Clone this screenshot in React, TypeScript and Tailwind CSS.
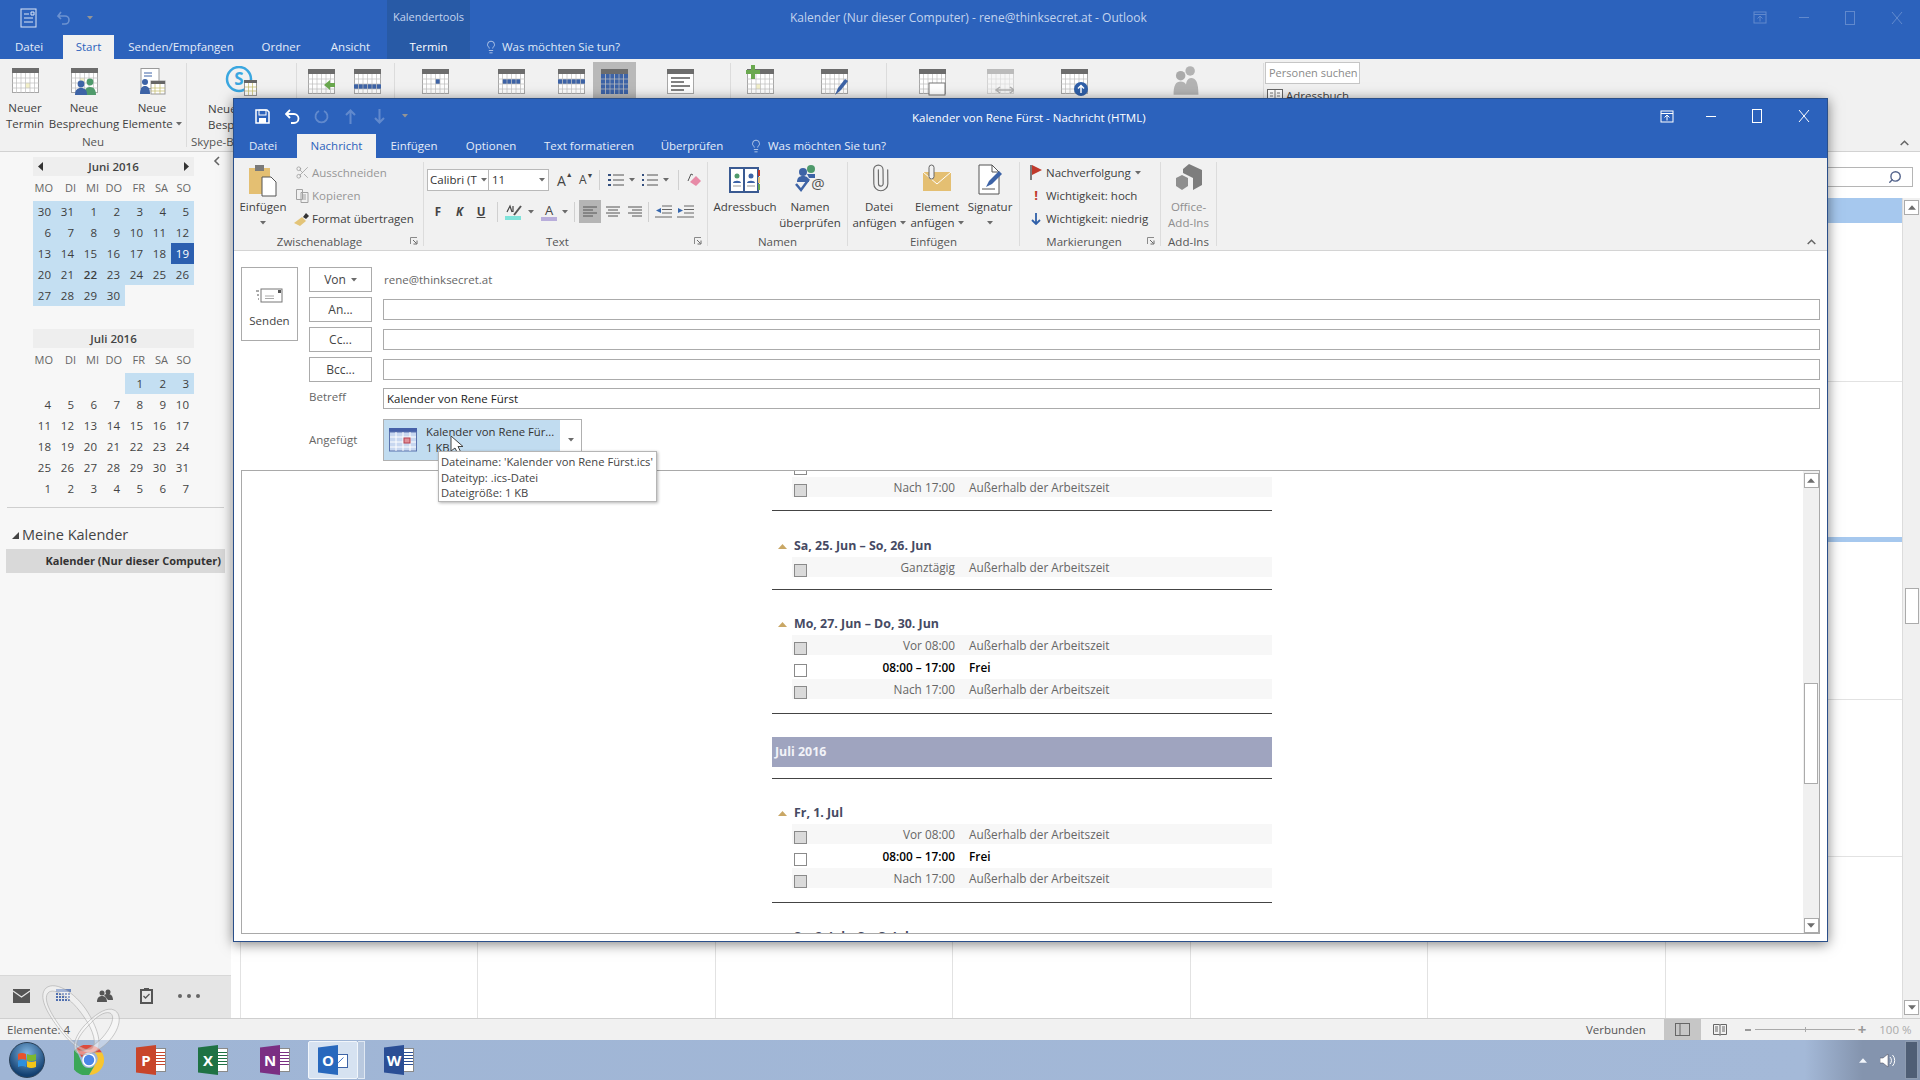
import React from "react";
import { Lightbulb, Scissors, Paperclip, Search, Check } from "lucide-react";

const BLUE = "bg-[#2c62bc]";

/* ---------- small drawing helpers ---------- */
type CalProps = { cells?: [number, number][]; fill?: string; faded?: boolean; children?: React.ReactNode };
const Cal = ({ cells = [], fill = "#3d63a6", faded, children }: CalProps) => (
  <svg width="27" height="27" viewBox="0 0 27 27" className={faded ? "opacity-40" : ""}>
    <rect x="0.5" y="0.5" width="26" height="24" fill="#fff" stroke="#a8a8a8" />
    <rect x="0" y="0" width="27" height="5" fill="#6c6c6c" />
    {cells.map(([c, r], i) => (
      <rect key={i} x={c * 4.5} y={5 + r * 5} width="4.5" height="5" fill={fill} />
    ))}
    {[4.5, 9, 13.5, 18, 22.5].map((x) => (
      <line key={x} x1={x} x2={x} y1="5" y2="25" stroke="#bdbdbd" strokeWidth="0.7" />
    ))}
    {[10, 15, 20].map((y) => (
      <line key={y} x1="0" x2="27" y1={y} y2={y} stroke="#bdbdbd" strokeWidth="0.7" />
    ))}
    {children}
  </svg>
);
const rows = (rs: number[], from = 0, to = 6) => {
  const o: [number, number][] = [];
  rs.forEach((r) => {
    for (let c = from; c < to; c++) o.push([c, r]);
  });
  return o;
};
const People = ({ c = "#3d63a6", c2 = "#4f9a6b" }: { c?: string; c2?: string }) => (
  <g>
    <circle cx="19" cy="14" r="3.4" fill={c2} />
    <path d="M13 27c0-5 2-8 6-8s6 3 6 8z" fill={c2} />
    <circle cx="10" cy="16" r="3.4" fill={c} />
    <path d="M4 27c0-5 2-7 6-7s6 2 6 7z" fill={c} />
  </g>
);
const Caret = ({ className = "" }: { className?: string }) => (
  <svg width="6" height="4" viewBox="0 0 6 4" className={className}>
    <path d="M0 0h6L3 3.5z" fill="#6b6b6b" />
  </svg>
);
const Launcher = () => (
  <svg width="8" height="8" viewBox="0 0 8 8" className="absolute right-[5px] top-[4px]">
    <path d="M.5 7V.5H7" fill="none" stroke="#8a8a8a" />
    <path d="M3 3l3.5 3.5M7 3.5V7H3.5" fill="none" stroke="#6b6b6b" />
  </svg>
);
const TriUp = ({ c = "#6d6d6d", w = 9 }: { c?: string; w?: number }) => (
  <svg width={w} height="5" viewBox="0 0 9 5">
    <path d="M4.5 0L9 5H0z" fill={c} />
  </svg>
);
const Chevron = () => (
  <svg width="9" height="6" viewBox="0 0 9 6">
    <path d="M.7 5l3.8-3.8L8.3 5" fill="none" stroke="#666" strokeWidth="1.5" />
  </svg>
);
const AlignIcon = ({ d }: { d: string }) => (
  <svg width="16" height="13" viewBox="0 0 16 13">
    <path d={d} stroke="#555" fill="none" />
  </svg>
);
const WinBtns = ({ faded }: { faded?: boolean }) => (
  <div className={`flex items-center ${faded ? "opacity-25" : ""}`}>
    <svg width="14" height="13" viewBox="0 0 14 13" className="mr-[32px]">
      <rect x="1" y="1" width="12" height="11" fill="none" stroke="#fff" />
      <path d="M1 3.500h12M7 10.500V5.500M4.500 7.500L7 5l2.500 2.500" fill="none" stroke="#fff" />
    </svg>
    <div className="w-[10px] h-px bg-white mr-[36px]" />
    <div className="w-[10px] h-[14px] border border-white mr-[36px]" />
    <svg width="12" height="14" viewBox="0 0 12 14">
      <path d="M1 1l10 12M11 1L1 13" stroke="#fff" fill="none" />
    </svg>
  </div>
);

/* ---------- ribbon parts ---------- */
const Sep = () => <div className="w-px my-[4px] bg-[#dcdcdc]" />;
const Group = ({
  w,
  label,
  lp = "",
  launcher,
  children,
}: {
  w: string;
  label?: string;
  lp?: string;
  launcher?: boolean;
  children: React.ReactNode;
}) => (
  <div className={`${w} relative flex flex-col`}>
    <div className="flex-1 flex min-h-0">{children}</div>
    <div className={`h-[17px] relative flex justify-center pt-[2px] ${lp} text-[11.5px] leading-[14px] text-[#555] shrink-0`}>
      {label}
      {launcher && <Launcher />}
    </div>
  </div>
);
const Big = ({
  w,
  icon,
  l1,
  l2,
  caret,
  grey,
}: {
  w: string;
  icon: React.ReactNode;
  l1?: string;
  l2?: string;
  caret?: boolean;
  grey?: boolean;
}) => (
  <div className={`${w} shrink-0 flex flex-col items-center pt-[6px] text-[11.5px] leading-[16px] ${grey ? "text-[#8e8e8e]" : "text-[#3f3f3f]"}`}>
    <div className="h-[35px] flex items-start justify-center">{icon}</div>
    <div className="whitespace-nowrap">{l1}</div>
    <div className="whitespace-nowrap h-[16px] flex items-center gap-[3px]">
      {l2}
      {caret && <Caret />}
    </div>
  </div>
);
const Small = ({ icon, text, grey, caret }: { icon: React.ReactNode; text: string; grey?: boolean; caret?: boolean }) => (
  <div className={`h-[23px] flex items-center text-[11.5px] whitespace-nowrap ${grey ? "text-[#979797]" : "text-[#3f3f3f]"}`}>
    <div className="w-[20px] flex justify-center shrink-0">{icon}</div>
    {text}
    {caret && <Caret className="ml-[4px]" />}
  </div>
);

/* ---------- outer ribbon ---------- */
const OuterTab = ({ w, t, active, dark, extra = "" }: { w: string; t: string; active?: boolean; dark?: boolean; extra?: string }) => (
  <div
    className={`${w} ${extra} h-full flex items-center justify-center text-[11.5px] ${
      active ? "bg-[#f1f1f1] text-[#2c62bc]" : dark ? "bg-[#285aa6] text-white" : "text-[#e4ecf8]"
    }`}
  >
    {t}
  </div>
);
const OuterBig = ({ w, icon, a, b, caret }: { w: string; icon: React.ReactNode; a: string; b: string; caret?: boolean }) => (
  <div className={`${w} shrink-0 flex flex-col items-center pt-[9px] text-[11.5px] leading-[16px] text-[#3f3f3f] whitespace-nowrap`}>
    <div className="h-[32px]">{icon}</div>
    <div>{a}</div>
    <div className="flex items-center gap-[3px]">
      {b}
      {caret && <Caret />}
    </div>
  </div>
);

const OuterHeader = () => (
  <div className={`${BLUE} h-[59px] shrink-0 flex flex-col`}>
    <div className="h-[35px] flex">
      <div className="w-[387px] flex items-center pl-[20px]">
        <svg width="18" height="20" viewBox="0 0 18 20">
          <rect x="1" y="1" width="15" height="18" fill="none" stroke="#dbe5f5" />
          <path d="M4 6h5M4 10h9M4 14h9M11 4h3v3h-3z" stroke="#dbe5f5" fill="none" />
        </svg>
        <svg width="14" height="14" viewBox="0 0 14 14" className="ml-[19px] opacity-30">
          <path d="M4 1L1 5l3 3M1 5h7a4 4 0 010 8H5" fill="none" stroke="#fff" strokeWidth="1.6" />
        </svg>
        <Caret className="ml-[16px] invert" />
      </div>
      <div className="w-[83px] bg-[#285aa6] flex items-center justify-center text-[11px] text-[#c4d4ee]">Kalendertools</div>
      <div className="ml-[320px] flex items-center text-[12px] text-[#c3d4ee] whitespace-nowrap w-[640px]">
        Kalender (Nur dieser Computer) - rene@thinksecret.at - Outlook
      </div>
      <div className="flex-1 flex justify-end items-center pr-[17px]">
        <WinBtns faded />
      </div>
    </div>
    <div className="h-[24px] flex">
      <OuterTab w="w-[63px]" extra="pr-[5px]" t="Datei" />
      <OuterTab w="w-[51px]" t="Start" active />
      <OuterTab w="w-[134px]" t="Senden/Empfangen" />
      <OuterTab w="w-[66px]" t="Ordner" />
      <OuterTab w="w-[73px]" t="Ansicht" />
      <OuterTab w="w-[83px]" t="Termin" dark />
      <div className="ml-[14px] flex items-center gap-[4px] text-[11.5px] text-[#dfe8f6]">
        <Lightbulb size={14} strokeWidth={1.2} />
        Was möchten Sie tun?
      </div>
    </div>
  </div>
);

const OuterRibbon = () => (
  <div className="h-[93px] shrink-0 bg-[#f1f1f1] border-b border-[#d2d2d2] flex">
    <div className="w-[186px] flex flex-col">
      <div className="flex-1 flex pl-[0px]">
        <OuterBig w="w-[50px]" icon={<Cal cells={[[3, 2]]} fill="#f3f0c8" />} a="Neuer" b="Termin" />
        <OuterBig
          w="w-[68px]"
          icon={
            <Cal cells={[[2, 1]]} fill="#f3f0c8">
              <People />
            </Cal>
          }
          a="Neue"
          b="Besprechung"
        />
        <OuterBig
          w="w-[68px]"
          icon={
            <svg width="27" height="27" viewBox="0 0 27 27">
              <rect x="2" y="0.500" width="18" height="20" fill="#fff" stroke="#9a9a9a" />
              <path d="M5 5h8M5 8h8" stroke="#3d63a6" />
              <circle cx="6" cy="14" r="3" fill="#3d63a6" />
              <path d="M1 26c0-6 2-8 5-8s5 2 5 8z" fill="#3d63a6" />
              <rect x="12" y="13" width="14" height="13" fill="#fff" stroke="#999" />
              <rect x="12" y="13" width="14" height="3" fill="#666" />
              <path d="M16 16v10M21 16v10M12 20h14M12 23h14" stroke="#c2b964" strokeWidth=".7" />
            </svg>
          }
          a="Neue"
          b="Elemente"
          caret
        />
      </div>
      <div className="text-center text-[11.5px] leading-[16px] pb-[1px] text-[#555]">Neu</div>
    </div>
    <Sep />
    <div className="w-[109px] flex flex-col">
      <div className="flex-1 pl-[38px] pt-[7px] flex flex-col text-[11.5px] leading-[16px] text-[#3f3f3f]">
        <svg width="32" height="30" viewBox="0 0 32 30" className="shrink-0">
          <circle cx="14" cy="13" r="12" fill="none" stroke="#3aa7e0" strokeWidth="2.500" />
          <text x="14" y="19" textAnchor="middle" fontSize="17" fontWeight="700" fill="#3aa7e0" fontFamily="Open Sans">S</text>
          <rect x="19.500" y="14.500" width="12" height="15" fill="#fff" stroke="#999" />
          <rect x="19" y="14" width="13" height="3" fill="#666" />
          <path d="M23.500 17v12M27.500 17v12M20 21h12M20 25h12" stroke="#c2b964" strokeWidth=".7" />
        </svg>
        <div className="-ml-[17px] mt-[5px] whitespace-nowrap">Neue</div>
        <div className="-ml-[17px] whitespace-nowrap">Besprechung</div>
      </div>
      <div className="text-[11.5px] leading-[16px] text-[#555] whitespace-nowrap pb-[1px] pl-[4px]">Skype-Besprechung</div>
    </div>
    <Sep />
    <div className="w-[97px] flex pt-[10px] pl-[11px] gap-[19px]">
      <Cal>
        <path d="M22 11l-6 5 6 5v-3h5v-4h-5z" fill="#6aa84f" />
      </Cal>
      <Cal cells={rows([2])} />
    </div>
    <Sep />
    <div className="w-[335px] flex items-start pt-[3px] pl-[27px]">
      <div className="pt-[7px]">
        <Cal cells={[[3, 1]]} />
      </div>
      <div className="pt-[7px] ml-[49px]">
        <Cal cells={rows([1], 1, 5)} />
      </div>
      <div className="pt-[7px] ml-[33px]">
        <Cal cells={rows([1])} />
      </div>
      <div className="ml-[8px] px-[8px] pt-[7px] pb-[6px] bg-[#b9b9b9] flex">
        <Cal cells={rows([0, 1, 2, 3])} />
      </div>
      <div className="pt-[7px] ml-[31px]">
        <svg width="27" height="27" viewBox="0 0 27 27">
          <rect x="0.500" y="0.500" width="26" height="24" fill="#fff" stroke="#a8a8a8" />
          <rect width="27" height="5" fill="#6c6c6c" />
          <path d="M4 9h19M4 13h13M4 17h19M4 21h13" stroke="#5a5a5a" strokeWidth="1.4" />
        </svg>
      </div>
    </div>
    <Sep />
    <div className="w-[155px] flex pt-[10px] pl-[16px]">
      <div className="relative">
        <Cal cells={[[2, 2]]} fill="#f3f0c8" />
        <svg width="14" height="14" viewBox="0 0 14 14" className="absolute -left-[1px] -top-[4px]">
          <path d="M5 0h4v5h5v4H9v5H5V9H0V5h5z" fill="#6aa84f" />
        </svg>
      </div>
      <div className="ml-[47px]">
        <Cal>
          <path d="M14 26l3-7 7-9 3 2-7 9z" fill="#3d63a6" />
        </Cal>
      </div>
    </div>
    <Sep />
    <div className="w-[376px] flex pt-[10px] pl-[32px] relative">
      <Cal>
        <rect x="10" y="14" width="16" height="12" fill="#fff" stroke="#777" />
      </Cal>
      <div className="ml-[41px]">
        <Cal faded>
          <path d="M10 21h16M13 18l-4 3 4 3M23 18l4 3-4 3" fill="none" stroke="#555" strokeWidth="1.500" />
        </Cal>
      </div>
      <div className="ml-[47px]">
        <Cal>
          <circle cx="20" cy="20" r="7" fill="#2f5fa8" />
          <path d="M20 24v-7M17 19.500l3-3 3 3" stroke="#fff" strokeWidth="1.500" fill="none" />
        </Cal>
      </div>
      <div className="ml-[81px] -mt-[4px] opacity-50">
        <svg width="34" height="32" viewBox="0 0 27 27">
          <circle cx="17" cy="5" r="4" fill="#777" />
          <circle cx="9" cy="9" r="4" fill="#666" />
          <path d="M3 25c0-8 2-11 6-11s6 3 6 11zM13 25c0-10 1-14 5-14s6 4 6 14z" fill="#777" />
        </svg>
      </div>
    </div>
    <Sep />
    <div className="w-[96px] flex flex-col pt-[3px] pl-[1px]">
      <div className="h-[22px] w-[95px] border border-[#c6c6c6] bg-white flex items-center pl-[3px] text-[11px] text-[#8a8a8a] whitespace-nowrap">
        Personen suchen
      </div>
      <div className="mt-[3px] flex items-center text-[11.5px] text-[#3f3f3f] pl-[2px] gap-[3px]">
        <svg width="16" height="13" viewBox="0 0 16 13">
          <rect x=".5" y=".5" width="15" height="12" fill="#fff" stroke="#666" />
          <path d="M8 1v11M3 4h3M3 7h3M10 4h3M10 7h3" stroke="#777" />
        </svg>
        Adressbuch
      </div>
    </div>
    <div className="flex-1 flex flex-col justify-end items-end pb-[5px] pr-[11px]">
      <Chevron />
    </div>
  </div>
);

/* ---------- left navigation ---------- */
const DOW = ["MO", "DI", "MI", "DO", "FR", "SA", "SO"];
const Month = ({
  title,
  arrows,
  days,
}: {
  title: string;
  arrows?: boolean;
  days: { t: string; hi?: boolean; sel?: boolean; b?: boolean }[];
}) => (
  <div className="w-[161px]">
    <div className="h-[19px] bg-[#eeeeee] flex items-center justify-between px-[5px] text-[11.5px] font-semibold text-[#444]">
      <span className={arrows ? "" : "invisible"}>
        <svg width="5" height="9" viewBox="0 0 5 9">
          <path d="M5 0v9L0 4.500z" fill="#333" />
        </svg>
      </span>
      {title}
      <span className={arrows ? "" : "invisible"}>
        <svg width="5" height="9" viewBox="0 0 5 9">
          <path d="M0 0v9l5-4.500z" fill="#333" />
        </svg>
      </span>
    </div>
    <div className="grid grid-cols-7 h-[25px] items-center text-[11px] text-[#666]">
      {DOW.map((d) => (
        <div key={d} className="text-right pr-[4px] -mr-px">
          {d}
        </div>
      ))}
    </div>
    <div className="grid grid-cols-7">
      {days.map((d, i) => (
        <div
          key={i}
          className={`h-[21px] text-right pr-[5px] text-[11.5px] leading-[21px] ${
            d.sel ? "bg-[#2b5fb0] text-white" : d.hi ? "bg-[#c4dff2] text-[#3d3d3d]" : "text-[#444]"
          } ${d.b ? "font-semibold" : ""}`}
        >
          {d.t}
        </div>
      ))}
    </div>
  </div>
);
const range = (a: number, b: number) => Array.from({ length: b - a + 1 }, (_, i) => a + i);
const june = [30, 31, ...range(1, 30)].map((n, i) => ({
  t: String(n),
  hi: true,
  sel: i > 1 && n === 19,
  b: i > 1 && n === 22,
}));
const july = [
  ...[0, 0, 0, 0].map(() => ({ t: "" })),
  ...[1, 2, 3].map((n) => ({ t: String(n), hi: true })),
  ...range(4, 31).map((n) => ({ t: String(n) })),
  ...range(1, 7).map((n) => ({ t: String(n) })),
];

const Nav = () => (
  <div className="w-[231px] shrink-0 flex flex-col bg-[#f7f7f7] relative">
    <div className="absolute left-[213px] top-[4px]">
      <svg width="7" height="10" viewBox="0 0 7 10">
        <path d="M6 1L2 5l4 4" fill="none" stroke="#666" strokeWidth="1.600" />
      </svg>
    </div>
    <div className="pl-[33px] pt-[5px]">
      <Month title="Juni 2016" arrows days={june} />
      <div className="h-[23px]" />
      <Month title="Juli 2016" days={july} />
    </div>
    <div className="mt-[8px] mx-[7px] h-px bg-[#cfcfcf]" />
    <div className="h-[41px] flex items-center pl-[12px] pt-[13px] text-[14.5px] text-[#444] gap-[3px]">
      <svg width="7" height="7" viewBox="0 0 7 7">
        <path d="M7 0v7H0z" fill="#444" />
      </svg>
      Meine Kalender
    </div>
    <div className="mx-[6px] h-[24px] bg-[#d9d9d9] flex items-center justify-end pr-[4px] text-[11px] font-bold text-[#333] whitespace-nowrap">
      Kalender (Nur dieser Computer)
    </div>
    <div className="flex-1" />
    <div className="h-[43px] bg-[#e5e5e5] border-t border-[#d8d8d8] flex items-center pl-[13px] pb-[3px]">
      <svg width="17" height="14" viewBox="0 0 17 14">
        <rect width="17" height="14" fill="#555" />
        <path d="M0 2l8.500 6L17 2" fill="none" stroke="#e5e5e5" strokeWidth="1.200" />
      </svg>
      <svg width="15" height="13" viewBox="0 0 15 13" className="ml-[26px]">
        <rect width="15" height="3" fill="#6b86bd" />
        <path d="M0 5h15M0 8h15M0 11h15" stroke="#4f6fb0" strokeWidth="2" strokeDasharray="2 1" />
      </svg>
      <svg width="16" height="13" viewBox="0 0 16 13" className="ml-[26px]">
        <circle cx="5" cy="4" r="2.500" fill="#555" />
        <circle cx="11" cy="3" r="2.500" fill="#555" />
        <path d="M0 13c0-4 2-6 5-6s5 2 5 6zM7 6c1-1 2-1 4-1 3 0 5 2 5 6h-5z" fill="#555" />
      </svg>
      <svg width="13" height="16" viewBox="0 0 13 16" className="ml-[27px]">
        <rect x="1" y="2" width="11" height="13" fill="none" stroke="#555" strokeWidth="2" />
        <rect x="4" y="0" width="5" height="3" fill="#555" />
        <path d="M3.500 8l2 2 4-4" fill="none" stroke="#555" strokeWidth="1.300" />
      </svg>
      <div className="ml-[25px] flex gap-[5px]">
        <div className="w-[4px] h-[4px] rounded-full bg-[#666]" />
        <div className="w-[4px] h-[4px] rounded-full bg-[#666]" />
        <div className="w-[4px] h-[4px] rounded-full bg-[#666]" />
      </div>
    </div>
  </div>
);

/* ---------- calendar background ---------- */
const ScrollBtn = ({ up }: { up?: boolean }) => (
  <div className="w-[15px] h-[15px] bg-white border border-[#ababab] flex items-center justify-center shrink-0">
    <div className={`flex ${up ? "" : "rotate-180"}`}>
      <TriUp w={8} />
    </div>
  </div>
);
const Content = () => (
  <div className="flex-1 flex flex-col bg-white min-w-0">
    <div className="h-[46px] shrink-0 pt-[15px] pl-[9px] pr-[7px]">
      <div className="h-[20px] border border-[#b5b5b5] flex items-center justify-end pr-[10px]">
        <Search size={14} strokeWidth={2.4} className="text-[#54648c] -scale-x-100" />
      </div>
    </div>
    <div className="flex-1 flex pl-[9px] min-h-0">
      <div className="flex-1 flex flex-col border-r border-[#dcdcdc] min-w-0">
        <div className="h-[25px] bg-[#a6c8ee] shrink-0" />
        <div className="flex-1 grid grid-cols-7 grid-rows-[159px_160px_158px_157px_1fr]">
          {range(1, 35).map((n) => (
            <div
              key={n}
              className={`border-l border-[#e2e2e2] ${n > 28 ? "" : n > 7 && n <= 14 ? "border-b-[5px] border-b-[#a6c8ee]" : "border-b"}`}
            />
          ))}
        </div>
      </div>
      <div className="w-[17px] shrink-0 bg-[#f0f0f0] flex flex-col items-center pt-[2px]">
        <ScrollBtn up />
        <div className="mt-[373px] w-[14px] h-[36px] bg-white border border-[#ababab]" />
        <div className="flex-1" />
        <ScrollBtn />
        <div className="h-[3px]" />
      </div>
    </div>
  </div>
);

/* ---------- dialog body rows ---------- */
const Row = ({ time, status, free }: { time: string; status: string; free?: boolean }) => (
  <div className="h-[22px] py-px pl-[20px]">
    <div className={`h-full flex ${free ? "text-black font-semibold" : "bg-[#f7f7f7] text-[#666]"} text-[11.8px] leading-[20px]`}>
      <div
        className={`ml-[2px] mt-[7px] w-[13px] h-[13px] shrink-0 border border-[#8a8a8a] ${
          free ? "bg-white" : "bg-[#dadada]"
        }`}
      />
      <div className="w-[148px] shrink-0 text-right whitespace-nowrap">{time}</div>
      <div className="ml-[14px] whitespace-nowrap">{status}</div>
    </div>
  </div>
);
const Head = ({ t }: { t: string }) => (
  <div className="h-[21px] flex items-center pl-[5px] gap-[6px] pt-[1px] text-[12.4px] font-bold text-[#464a63] whitespace-nowrap">
    <TriUp c="#c9a765" w={11} />
    {t}
  </div>
);
const Rule = ({ className }: { className: string }) => <div className={`${className} h-px bg-[#444]`} />;
const NACH = "Nach 17:00";
const VOR = "Vor 08:00";
const OUT = "Außerhalb der Arbeitszeit";
const Body = () => (
  <div className="mx-[7px] h-[464px] border border-[#a9a9a9] flex overflow-hidden bg-white">
    <div className="flex-1 min-w-0 overflow-hidden">
      <div className="w-[500px] ml-[530px] -mt-[17px]">
        <Row time="08:00 – 17:00" status="Frei" free />
        <Row time={NACH} status={OUT} />
        <Rule className="mt-[12px]" />
        <div className="pt-[24px]">
          <Head t="Sa, 25. Jun – So, 26. Jun" />
          <Row time="Ganztägig" status={OUT} />
        </div>
        <Rule className="mt-[11px]" />
        <div className="pt-[23px]">
          <Head t="Mo, 27. Jun – Do, 30. Jun" />
          <Row time={VOR} status={OUT} />
          <Row time="08:00 – 17:00" status="Frei" free />
          <Row time={NACH} status={OUT} />
        </div>
        <Rule className="mt-[13px]" />
        <div className="mt-[23px] h-[30px] bg-[#9fa4bf] flex items-center pl-[3px] pt-[1px] text-[12.4px] font-bold text-[#f2f3f8]">
          Juli 2016
        </div>
        <Rule className="mt-[11px]" />
        <div className="pt-[23px]">
          <Head t="Fr, 1. Jul" />
          <Row time={VOR} status={OUT} />
          <Row time="08:00 – 17:00" status="Frei" free />
          <Row time={NACH} status={OUT} />
        </div>
        <Rule className="mt-[13px]" />
        <div className="pt-[23px]">
          <Head t="Sa, 2. Jul – So, 3. Jul" />
        </div>
      </div>
    </div>
    <div className="w-[16px] shrink-0 bg-[#f0f0f0] flex flex-col items-center pt-[2px]">
      <ScrollBtn up />
      <div className="mt-[195px] w-[14px] h-[101px] bg-white border border-[#ababab]" />
      <div className="flex-1" />
      <ScrollBtn />
    </div>
  </div>
);

/* ---------- dialog ---------- */
const FormBtn = ({ children }: { children: React.ReactNode }) => (
  <div className="w-[63px] h-[25px] shrink-0 border border-[#ababab] flex items-center justify-center gap-[5px] text-[12px] text-[#444]">
    {children}
  </div>
);
const FormRow = ({ label }: { label: string }) => (
  <div className="h-[25px] flex items-center mb-[5px]">
    <FormBtn>{label}</FormBtn>
    <div className="ml-[11px] flex-1 h-[21px] border border-[#ababab] bg-white" />
  </div>
);

const Dlg = () => (
  <div className="absolute left-[233px] top-[98px] w-[1595px] h-[844px] bg-white border border-[#2a4f8a] shadow-[0_2px_12px_rgba(0,0,0,0.5)] flex flex-col z-10">
    {/* title */}
    <div className={`${BLUE} h-[59px] shrink-0 flex flex-col`}>
      <div className="h-[34px] flex items-center relative">
        <div className="flex items-center pl-[21px]">
          <svg width="15" height="15" viewBox="0 0 15 15">
            <path d="M1 1h11l2 2v11H1z" fill="none" stroke="#fff" strokeWidth="1.500" />
            <rect x="4" y="1" width="7" height="5" fill="none" stroke="#fff" />
            <rect x="4" y="9" width="7" height="5" fill="#fff" />
          </svg>
          <svg width="15" height="15" viewBox="0 0 15 15" className="ml-[15px]">
            <path d="M5 1L1 5l4 4M1 5h8a4.500 4.500 0 010 9H6" fill="none" stroke="#fff" strokeWidth="1.800" />
          </svg>
          <svg width="15" height="15" viewBox="0 0 15 15" className="ml-[14px] opacity-25">
            <path d="M10 2a6 6 0 11-5 0" fill="none" stroke="#fff" strokeWidth="1.800" />
          </svg>
          <svg width="13" height="15" viewBox="0 0 13 15" className="ml-[15px] opacity-25">
            <path d="M6.500 15V2M2 6l4.500-4.500L11 6" fill="none" stroke="#fff" strokeWidth="2" />
          </svg>
          <svg width="13" height="15" viewBox="0 0 13 15" className="ml-[16px] opacity-25">
            <path d="M6.500 0v13M2 9l4.500 4.500L11 9" fill="none" stroke="#fff" strokeWidth="2" />
          </svg>
          <Caret className="ml-[16px] invert" />
        </div>
        <div className="ml-[504px] mt-[4px] text-[11.5px] text-white whitespace-nowrap">Kalender von Rene Fürst - Nachricht (HTML)</div>
        <div className="flex-1 flex justify-end pr-[17px]">
          <WinBtns />
        </div>
      </div>
      <div className="flex-1 flex pt-[1px]">
        <div className="w-[63px] pr-[5px] flex items-center justify-center text-[11.5px] text-[#e4ecf8]">Datei</div>
        <div className="w-[79px] bg-[#f1f1f1] flex items-center justify-center text-[11.5px] text-[#2c62bc]">Nachricht</div>
        <div className="w-[76px] flex items-center justify-center text-[11.5px] text-[#e4ecf8]">Einfügen</div>
        <div className="w-[78px] flex items-center justify-center text-[11.5px] text-[#e4ecf8]">Optionen</div>
        <div className="w-[118px] flex items-center justify-center text-[11.5px] text-[#e4ecf8]">Text formatieren</div>
        <div className="w-[88px] flex items-center justify-center text-[11.5px] text-[#e4ecf8]">Überprüfen</div>
        <div className="ml-[13px] flex items-center gap-[5px] text-[11.5px] text-[#e4ecf8]">
          <Lightbulb size={14} strokeWidth={1.2} />
          Was möchten Sie tun?
        </div>
      </div>
    </div>
    {/* ribbon */}
    <div className="h-[93px] shrink-0 bg-[#f1f1f1] border-b border-[#d4d4d4] flex">
      <Group w="w-[189px]" label="Zwischenablage" lp="pr-[18px]" launcher>
        <Big
          w="w-[58px]"
          icon={
            <svg width="30" height="33" viewBox="0 0 30 33">
              <rect x="1" y="4" width="21" height="26" fill="#e4bf72" />
              <rect x="7" y="1" width="9" height="6" fill="#7a7a7a" />
              <path d="M14 13h9l5 5v14H14z" fill="#fff" stroke="#555" />
            </svg>
          }
          l1="Einfügen"
          caret
        />
        <div className="pt-[3px]">
          <Small grey icon={<Scissors size={15} strokeWidth={1.2} className="text-[#9a9a9a]" />} text="Ausschneiden" />
          <Small
            grey
            icon={
              <svg width="15" height="15" viewBox="0 0 15 15">
                <path d="M1.500 1.500h6v10h-6zM6 4.500h7v10H6zM8 7h3M8 9h3M8 11h3" fill="#f1f1f1" stroke="#a2a2a2" />
              </svg>
            }
            text="Kopieren"
          />
          <Small
            icon={
              <svg width="16" height="14" viewBox="0 0 16 14">
                <path d="M0 11L8 5l4 4-6 5z" fill="#e3c478" />
                <path d="M9 5l3-4 3 3-3 3z" fill="#333" />
              </svg>
            }
            text="Format übertragen"
          />
        </div>
      </Group>
      <Sep />
      <Group w="w-[283px]" label="Text" lp="pr-[16px]" launcher>
        <div className="pl-[3px] pt-[11px] w-full">
          <div className="flex items-center h-[22px]">
            <div className="w-[62px] h-[22px] bg-white border border-[#b9b9b9] flex items-center pl-[2px] gap-[4px] text-[11.5px] text-[#333] whitespace-nowrap overflow-hidden">
              Calibri (T
              <Caret className="shrink-0" />
            </div>
            <div className="w-[61px] h-[22px] -ml-px bg-white border border-[#b9b9b9] flex items-center justify-between px-[3px] text-[11.5px] text-[#333]">
              11
              <Caret />
            </div>
            <div className="ml-[8px] text-[14px] text-[#444] w-[22px]">
              A<span className="text-[7px] align-top">▲</span>
            </div>
            <div className="text-[12px] text-[#444] w-[20px]">
              A<span className="text-[7px] align-top">▼</span>
            </div>
            <div className="w-px h-[20px] bg-[#d0d0d0] mr-[8px]" />
            <svg width="16" height="14" viewBox="0 0 16 14">
              <path d="M5 2h11M5 7h11M5 12h11" stroke="#555" />
              <path d="M0 2h3M0 7h3M0 12h3" stroke="#35507f" strokeWidth="2" />
            </svg>
            <Caret className="ml-[5px]" />
            <svg width="16" height="14" viewBox="0 0 16 14" className="ml-[7px]">
              <path d="M5 2h11M5 7h11M5 12h11" stroke="#555" />
              <path d="M0 2h3M0 7h3M0 12h3" stroke="#35507f" strokeWidth="2" strokeDasharray="2 1" />
            </svg>
            <Caret className="ml-[5px]" />
            <div className="w-px h-[20px] bg-[#d0d0d0] ml-[9px] mr-[8px]" />
            <svg width="15" height="15" viewBox="0 0 15 15">
              <path d="M3 9L9 3l5 5-5 5z" fill="#e78aa6" />
              <path d="M1 8L4 1l2 1" fill="none" stroke="#555" />
            </svg>
          </div>
          <div className="flex items-center h-[23px] mt-[9px]">
            <div className="w-[22px] text-center text-[11.5px] font-bold text-[#444]">F</div>
            <div className="w-[21px] text-center text-[11.5px] font-bold italic text-[#444]">K</div>
            <div className="w-[22px] text-center text-[11.5px] font-bold underline text-[#444]">U</div>
            <div className="ml-[5px] w-px h-[20px] bg-[#d0d0d0]" />
            <svg width="18" height="18" viewBox="0 0 18 18" className="ml-[7px]">
              <rect x="0" y="13" width="16" height="4" fill="#7fe3da" />
              <path d="M2 9l3-6 2 6M8 3v6" fill="none" stroke="#444" strokeWidth="1.200" />
              <path d="M9 12l7-9" stroke="#555" strokeWidth="2" />
            </svg>
            <Caret className="ml-[5px]" />
            <div className="ml-[7px] w-[16px] flex flex-col items-center text-[13px] leading-[14px] font-medium text-[#444]">
              A<div className="w-[16px] h-[4px] bg-[#b9aedb]" />
            </div>
            <Caret className="ml-[5px]" />
            <div className="ml-[6px] w-px h-[20px] bg-[#d0d0d0]" />
            <div className="ml-[4px] w-[22px] h-[23px] bg-[#b5b5b5] flex items-center justify-center">
              <AlignIcon d="M1 2h14M1 5h10M1 8h14M1 11h10" />
            </div>
            <div className="ml-[4px]">
              <AlignIcon d="M1 2h14M3 5h10M1 8h14M3 11h10" />
            </div>
            <div className="ml-[6px]">
              <AlignIcon d="M1 2h14M5 5h10M1 8h14M5 11h10" />
            </div>
            <div className="ml-[5px] w-px h-[20px] bg-[#d0d0d0]" />
            <svg width="17" height="13" viewBox="0 0 17 13" className="ml-[6px]">
              <path d="M7 1h10M7 4.500h10M7 8h10M0 12h17" stroke="#666" />
              <path d="M6 3v5L1 5.500z" fill="#3566ad" />
            </svg>
            <svg width="17" height="13" viewBox="0 0 17 13" className="ml-[5px]">
              <path d="M7 1h10M7 4.500h10M7 8h10M0 12h17" stroke="#666" />
              <path d="M1 3v5l5-2.500z" fill="#3566ad" />
            </svg>
          </div>
        </div>
      </Group>
      <Sep />
      <Group w="w-[139px]" label="Namen">
        <Big
          w="w-[74px]"
          icon={
            <svg width="32" height="27" viewBox="0 0 32 27" className="mt-[3px]">
              <rect x="1" y="1" width="14" height="24" fill="#fff" stroke="#3a5a92" strokeWidth="2" />
              <rect x="15" y="1" width="14" height="24" fill="#fff" stroke="#3a5a92" strokeWidth="2" />
              <rect x="29" y="3" width="2" height="6" fill="#c0392b" />
              <rect x="29" y="10" width="2" height="6" fill="#e4bf72" />
              <rect x="29" y="17" width="2" height="6" fill="#6aa84f" />
              <circle cx="8" cy="9" r="2.500" fill="#4f9a6b" />
              <circle cx="22" cy="9" r="2.500" fill="#3d63a6" />
              <path d="M4 16c0-3 8-3 8 0zM18 16c0-3 8-3 8 0z" fill="#3d63a6" />
              <path d="M4 19h8M18 19h8" stroke="#999" />
            </svg>
          }
          l1="Adressbuch"
        />
        <Big
          w="w-[56px]"
          icon={
            <svg width="32" height="30" viewBox="0 0 32 30">
              <circle cx="17" cy="5" r="4" fill="#4f9a6b" />
              <circle cx="9" cy="8" r="4" fill="#3d63a6" />
              <path d="M3 18c0-4 2-6 6-6s6 2 6 6zM13 10h8v4h-6z" fill="#3d63a6" />
              <path d="M2 20l5 6 8-11" fill="none" stroke="#3d63a6" strokeWidth="2.500" />
              <text x="24" y="25" textAnchor="middle" fontSize="15" fill="#555" fontFamily="Open Sans">@</text>
            </svg>
          }
          l1="Namen"
          l2="überprüfen"
        />
      </Group>
      <Sep />
      <Group w="w-[171px]" label="Einfügen">
        <Big
          w="w-[62px]"
          icon={
            <div className="pl-[2px]">
              <Paperclip size={28} strokeWidth={1} className="text-[#6b6b6b] -rotate-45" />
            </div>
          }
          l1="Datei"
          l2="anfügen"
          caret
        />
        <Big
          w="w-[54px]"
          icon={
            <svg width="30" height="28" viewBox="0 0 30 28">
              <rect x="1" y="8" width="28" height="19" fill="#e4bf72" />
              <path d="M1 8l14 12L29 8" fill="none" stroke="#fff" />
              <rect x="7" y="1" width="5" height="14" rx="2.500" fill="#f1f1f1" stroke="#666" />
            </svg>
          }
          l1="Element"
          l2="anfügen"
          caret
        />
        <Big
          w="w-[52px]"
          icon={
            <svg width="28" height="32" viewBox="0 0 28 32">
              <path d="M3 1h13l7 7v22H3z" fill="#fff" stroke="#555" />
              <path d="M16 1v7h7" fill="none" stroke="#555" />
              <path d="M6 25h13" stroke="#555" />
              <path d="M10 23l3-6 10-10 3 3-10 10z" fill="#3d63a6" />
            </svg>
          }
          l1="Signatur"
          caret
        />
      </Group>
      <Sep />
      <Group w="w-[140px]" label="Markierungen" lp="pr-[12px]" launcher>
        <div className="pt-[3px] pl-[6px]">
          <Small
            caret
            icon={
              <svg width="13" height="15" viewBox="0 0 13 15">
                <path d="M1 0v15" stroke="#555" strokeWidth="1.500" />
                <path d="M2 0l10 5-10 5z" fill="#c0392b" />
              </svg>
            }
            text="Nachverfolgung"
          />
          <Small icon={<span className="text-[13px] font-bold text-[#c0392b]">!</span>} text="Wichtigkeit: hoch" />
          <Small
            icon={
              <svg width="10" height="12" viewBox="0 0 10 12">
                <path d="M5 0v11M1 7l4 4 4-4" fill="none" stroke="#2f5fa8" strokeWidth="1.800" />
              </svg>
            }
            text="Wichtigkeit: niedrig"
          />
        </div>
      </Group>
      <Sep />
      <Group w="w-[55px]" label="Add-Ins">
        <Big
          w="w-[55px]"
          grey
          icon={
            <svg width="26" height="28" viewBox="0 0 26 28">
              <path d="M13 0l13 6v15l-9 5V14L7 9V5z" fill="#7d7d7d" />
              <path d="M6 11l6 3v8l-6 4-6-4v-8z" fill="#8f8f8f" />
            </svg>
          }
          l1="Office-"
          l2="Add-Ins"
        />
      </Group>
      <div className="w-px my-[4px] bg-[#dcdcdc]" />
      <div className="flex-1 flex justify-end items-end pr-[11px] pb-[5px]">
        <Chevron />
      </div>
    </div>
    {/* form */}
    <div className="flex pl-[7px] pr-[7px] pt-[16px] h-[219px] shrink-0">
      <div className="w-[57px] h-[74px] shrink-0 border border-[#ababab] flex flex-col items-center pt-[20px] text-[11.5px] text-[#444]">
        <svg width="28" height="15" viewBox="0 0 28 15" className="mb-[9px]">
          <path d="M0 3h3M1 7h2M2 11h1" stroke="#555" />
          <rect x="5" y="1" width="21" height="13" fill="#fff" stroke="#777" />
          <path d="M9 8h9M9 10.500h9" stroke="#aaa" />
          <rect x="22" y="2" width="3" height="3" fill="#555" />
        </svg>
        Senden
      </div>
      <div className="ml-[11px] flex-1 min-w-0 flex flex-col">
        <div className="h-[25px] flex items-center mb-[5px]">
          <FormBtn>
            Von
            <Caret />
          </FormBtn>
          <div className="ml-[12px] text-[11.5px] text-[#666]">rene@thinksecret.at</div>
        </div>
        <FormRow label="An..." />
        <FormRow label="Cc..." />
        <FormRow label="Bcc..." />
        <div className="h-[25px] -mt-[1px] flex items-center mb-[7px]">
          <div className="w-[63px] text-[11.5px] text-[#666] -mt-[4px]">Betreff</div>
          <div className="ml-[11px] flex-1 h-[21px] border border-[#ababab] bg-white flex items-center pl-[3px] text-[11.5px] text-[#222]">
            Kalender von Rene Fürst
          </div>
        </div>
        <div className="flex items-center pt-[1px]">
          <div className="w-[63px] text-[11.5px] text-[#666]">Angefügt</div>
          <div className="ml-[11px] relative w-[199px] h-[42px] border border-[#b0b0b0] flex">
            <div className="w-[176px] bg-[#c1dcf0] flex items-center pl-[5px]">
              <svg width="28" height="24" viewBox="0 0 28 24">
                <rect x="0" y="0" width="28" height="4" fill="#4660a8" />
                <rect x="0.500" y="4" width="27" height="19" fill="#c8d7f0" stroke="#5b73ad" />
                <path d="M7 4v19M14 4v19M21 4v19M1 9h26M1 14h26M1 19h26" stroke="#fff" />
                <rect x="15" y="10" width="6" height="5" fill="#e08f98" stroke="#b6404f" />
              </svg>
              <div className="ml-[9px] text-[11.3px] leading-[16px] text-[#333] whitespace-nowrap">
                <div>Kalender von Rene Für...</div>
                <div>1 KB</div>
              </div>
            </div>
            <div className="flex-1 flex items-center justify-center">
              <Caret />
            </div>
            <svg width="14" height="20" viewBox="0 0 14 20" className="absolute left-[66px] top-[15px]">
              <path d="M1 1v15l4-3 3 6 3-1.500-3-6h5z" fill="#fff" stroke="#444" />
            </svg>
            <div className="absolute left-[54px] top-[31px] w-[219px] h-[51px] bg-white border border-[#b5b5b5] shadow-[1px_1px_3px_rgba(0,0,0,0.3)] pl-[2px] pt-[2px] text-[11.2px] leading-[15.500px] text-[#444] whitespace-nowrap z-10">
              <div>Dateiname: 'Kalender von Rene Fürst.ics'</div>
              <div>Dateityp: .ics-Datei</div>
              <div>Dateigröße: 1 KB</div>
            </div>
          </div>
        </div>
      </div>
    </div>
    <Body />
  </div>
);

/* ---------- status and task bar ---------- */
const Status = () => (
  <div className="h-[22px] shrink-0 bg-[#f1f1f1] border-t border-[#cfcfcf] flex items-center pl-[7px] text-[11.5px] text-[#555]">
    <div className="w-[1579px] whitespace-nowrap">Elemente: 4</div>
    <div className="whitespace-nowrap">Verbunden</div>
    <div className="ml-[18px] w-[37px] h-full bg-[#c6c6c6] flex items-center justify-center">
      <svg width="15" height="13" viewBox="0 0 15 13">
        <rect x=".5" y=".5" width="14" height="12" fill="none" stroke="#666" />
        <path d="M5 .5v12" stroke="#666" />
      </svg>
    </div>
    <svg width="14" height="14" viewBox="0 0 14 14" className="ml-[12px]">
      <path d="M.5 1.500h6l.5 1 .5-1h6v10h-6l-.5 1-.5-1h-6zM7 2.500v9M2 4h3M2 6h3M2 8h3M9 4h3M9 6h3M9 8h3" fill="none" stroke="#666" />
    </svg>
    <div className="ml-[18px] w-[6px] h-[2px] bg-[#999]" />
    <div className="ml-[4px] w-[100px] h-px bg-[#aaa] relative">
      <div className="absolute left-[50px] -top-[2px] w-px h-[5px] bg-[#aaa]" />
    </div>
    <div className="ml-[3px] text-[15px] leading-[15px] font-bold text-[#999]">+</div>
    <div className="ml-[13px] text-[#aaa] whitespace-nowrap">100 %</div>
  </div>
);
const Office = ({ bg, letter, lines, ml }: { bg: string; letter: string; lines: React.ReactNode; ml: string }) => (
  <div className={`${ml} relative w-[30px] h-[30px] shrink-0`}>
    <div className="absolute right-0 top-[3px] w-[20px] h-[24px] bg-white border border-[#8a8a8a] overflow-hidden">{lines}</div>
    <div
      className={`absolute left-0 top-0 w-[20px] h-[30px] ${bg} flex items-center justify-center text-white font-bold text-[15px] [clip-path:polygon(0_8%,100%_0,100%_100%,0_92%)]`}
    >
      {letter}
    </div>
  </div>
);
const lineStack = (c: string) => (
  <div className="pl-[9px] pt-[3px] flex flex-col gap-[2px]">
    {[0, 1, 2, 3, 4].map((i) => (
      <div key={i} className={`h-px w-[9px] ${c}`} />
    ))}
  </div>
);
const Taskbar = () => (
  <div className="h-[40px] shrink-0 bg-[linear-gradient(90deg,#9fb5d5_0%,#a4b9d8_94%,#8494ae_97%,#8494ae_100%)] flex items-center">
    <div className="ml-[9px] w-[36px] h-[36px] rounded-full bg-[radial-gradient(circle_at_50%_30%,#7fb4e0,#123f70_75%)] border border-[#2a3f55] flex items-center justify-center shrink-0">
      <svg width="20" height="18" viewBox="0 0 20 18">
        <path d="M1 3q4-2 8 0v6q-4-2-8 0z" fill="#e8532b" />
        <path d="M10 3q4 2 9 0v6q-5 2-9 0z" fill="#7cb82f" />
        <path d="M1 10q4-2 8 0v6q-4-2-8 0z" fill="#2f8fdc" />
        <path d="M10 10q4 2 9 0v6q-5 2-9 0z" fill="#f5c518" />
      </svg>
    </div>
    <svg width="30" height="30" viewBox="0 0 30 30" className="ml-[29px] shrink-0">
      <path d="M15 0a15 15 0 0113 7.500H15a7.500 7.500 0 00-7 5L2 4A15 15 0 0115 0z" fill="#dd4b3e" />
      <path d="M28 7.500A15 15 0 0115 30l6.500-11a7.500 7.500 0 00-1-11.500z" fill="#f7c531" />
      <path d="M2 4a15 15 0 0013 26l6.500-11a7.500 7.500 0 01-13 .5z" fill="#3aa757" />
      <circle cx="15" cy="15" r="6" fill="#4a86e8" stroke="#fff" strokeWidth="1.500" />
    </svg>
    <Office ml="ml-[32px]" bg="bg-[#c8452a]" letter="P" lines={lineStack("bg-[#c8452a]")} />
    <Office ml="ml-[32px]" bg="bg-[#1f7244]" letter="X" lines={lineStack("bg-[#1f7244]")} />
    <Office ml="ml-[32px]" bg="bg-[#7b2f83]" letter="N" lines={lineStack("bg-[#7b2f83]")} />
    <div className="ml-[18px] w-[50px] h-[38px] shrink-0 bg-[#d6e2f1] border border-[#f2f6fb] rounded-[2px] flex items-center justify-center">
      <div className="relative w-[30px] h-[30px]">
        <div className="absolute right-0 top-[9px] w-[18px] h-[14px] bg-white border border-[#3d63a6] flex items-start justify-center">
          <Check size={11} strokeWidth={2} className="text-[#2c62bc]" />
        </div>
        <div className="absolute left-0 top-0 w-[20px] h-[30px] bg-[#2868bd] flex items-center justify-center text-white font-bold text-[15px] [clip-path:polygon(0_8%,100%_0,100%_100%,0_92%)]">
          O
        </div>
      </div>
    </div>
    <div className="w-[7px] h-[38px] shrink-0 bg-[#b9c9df] border border-[#e0e8f2] border-l-0 mr-[19px]" />
    <Office ml="" bg="bg-[#2b4e95]" letter="W" lines={lineStack("bg-[#2b4e95]")} />
    <div className="flex-1" />
    <div className="mr-[13px] flex">
      <TriUp c="#f2f6fb" w={8} />
    </div>
    <svg width="16" height="15" viewBox="0 0 16 15" className="mr-[9px] shrink-0">
      <path d="M0 5h3l5-4v13l-5-4H0z" fill="#fff" stroke="#445" strokeWidth=".5" />
      <path d="M10 4a5 5 0 010 7M12.500 2a8 8 0 010 11" fill="none" stroke="#fff" />
    </svg>
    <div className="w-[13px] h-[38px] mr-[2px] border border-[#8d9bb0] bg-[#4f5e75]" />
  </div>
);

const Watermark = () => (
  <svg width="82" height="72" viewBox="0 0 82 72" className="absolute left-[40px] top-[984px] z-20 pointer-events-none">
    <g fill="rgba(255,255,255,0.38)" stroke="rgba(170,170,170,0.6)" strokeWidth="1">
      <path fillRule="evenodd" d="M6 4C16-4 38 10 50 32c10 18 12 32 4 36-8 3-22-6-34-22C6 28-2 12 6 4zm2 5c-5 6 2 20 14 36 10 14 24 24 30 20 5-4 2-18-8-32C32 15 14 2 8 9z" />
      <path fillRule="evenodd" d="M74 26c9 4 6 20-6 32C56 70 42 74 36 68c-5-6 1-20 12-30C58 28 68 23 74 26zm-4 3c-6-2-14 4-22 13-10 10-14 20-10 24 4 3 14-2 24-12 9-10 14-22 8-25z" />
    </g>
  </svg>
);

export default function App() {
  return (
    <div className="relative w-[1920px] h-[1080px] overflow-hidden flex flex-col bg-white font-['Open_Sans','Noto_Sans',sans-serif]">
      <OuterHeader />
      <OuterRibbon />
      <div className="flex-1 flex min-h-0">
        <Nav />
        <Content />
      </div>
      <Status />
      <Taskbar />
      <Dlg />
      <Watermark />
    </div>
  );
}
